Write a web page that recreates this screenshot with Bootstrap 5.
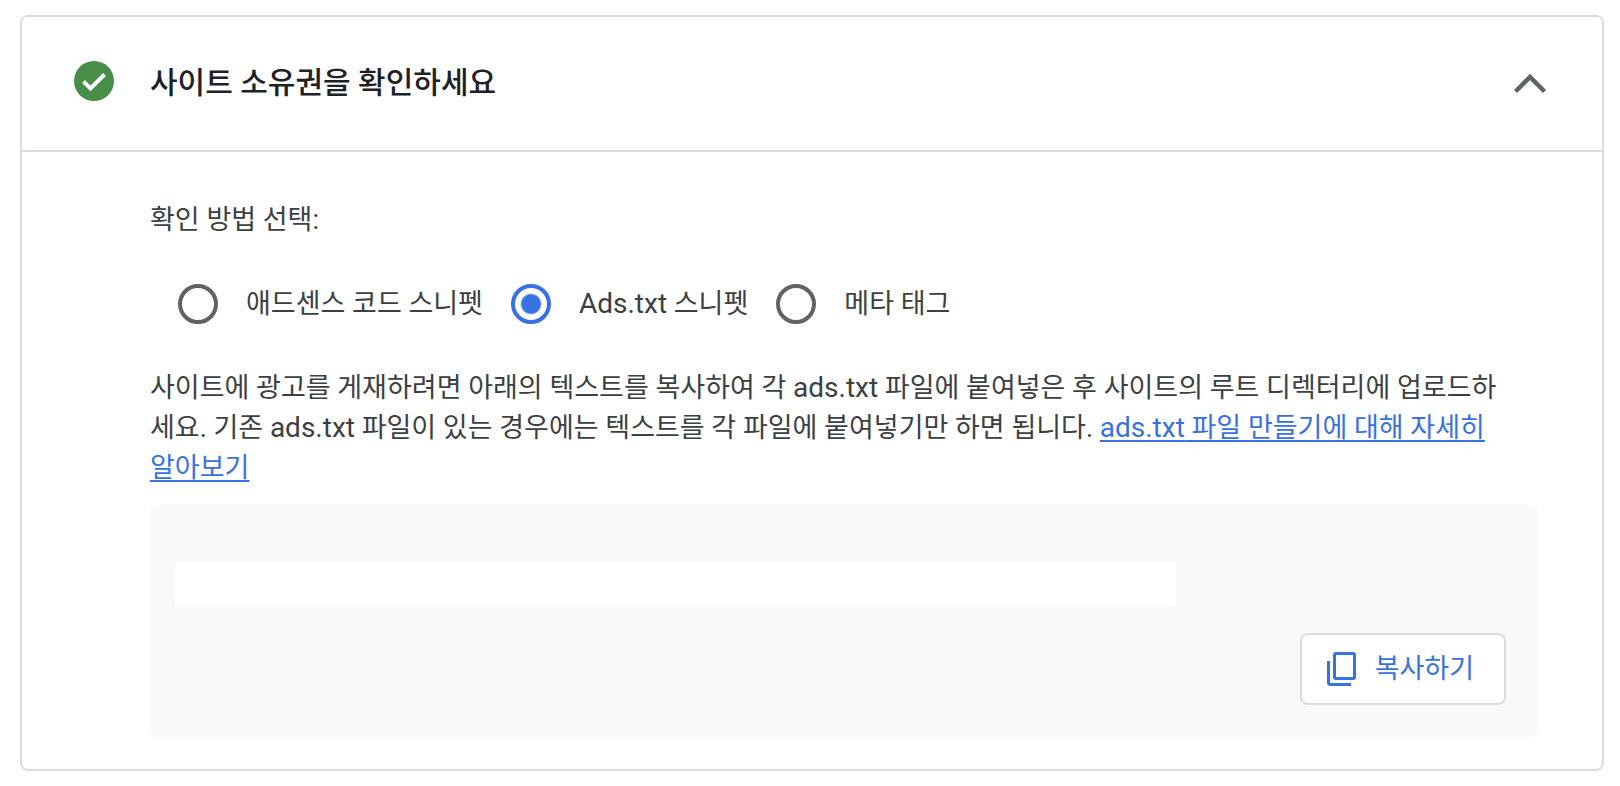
<!DOCTYPE html>
<html lang="ko">
<head>
<meta charset="utf-8">
<meta name="viewport" content="width=device-width, initial-scale=1">
<title>사이트 소유권 확인</title>
<link href="https://cdn.jsdelivr.net/npm/bootstrap@5.3.0/dist/css/bootstrap.min.css" rel="stylesheet">
<style>
  body { font-family: Roboto, "Noto Sans CJK KR", sans-serif; font-size: 27px; line-height: 40px; color: #3c4043; background: #fff; }
  .verify-wrap { padding: 15px 16px 16px 20px; }
  .verify-card { border: 2px solid #dadce0; border-radius: 8px; }
  .verify-head { padding: 44px 52px 45px; border-bottom: 2px solid #dadce0; border-radius: 0; background: #fff; gap: 36px; }
  .verify-title { font-size: 30px; line-height: 44px; font-weight: 500; color: #202124; }
  .toggle-btn { line-height: 0; color: #5f6368; }
  .verify-body { padding: 48px 64px 32px 128px; }
  .methods { padding: 0 28px; margin: 44px 0; gap: 28px; }
  .methods label { gap: 28px; }
  .methods .form-check-input { width: 40px; height: 40px; margin: 0; border: 4px solid #5f6368; background: #fff; box-shadow: none; }
  .methods .form-check-input:checked { border-color: #3871e0; background: radial-gradient(circle, #3871e0 0 9px, #fff 11px); }
  .file-name { font-size: 28px; line-height: 1; }
  .guide { padding-right: 34px; }
  .guide a { color: #3871e0; text-decoration-thickness: 2px; text-underline-offset: 3px; }
  .snippet { margin-top: 17px; padding: 58px 32px 32px 25px; border-radius: 8px; background: #f8f9fb; }
  .snippet-code { width: 100%; max-width: 1001px; height: 43px; }
  .copy-btn { margin-top: 27px; padding: 14px 30px 14px 24px; gap: 18px; border: 2px solid #dadce0; border-radius: 8px; background: #fff; color: #3871e0; font-size: 27px; line-height: 40px; }
</style>
</head>
<body>
<main class="verify-wrap">
  <section class="card verify-card">
    <div class="card-header verify-head d-flex align-items-start">
      <svg width="40" height="40" viewBox="0 0 40 40" aria-hidden="true"><circle cx="20" cy="20" r="20" fill="#478f48"/><path d="M9.5 20.500L16.500 27.500L30.500 13.500" fill="none" stroke="#fff" stroke-width="4"/></svg>
      <h1 class="verify-title flex-grow-1 mb-0">사이트 소유권을 확인하세요</h1>
      <button type="button" class="btn p-0 border-0 toggle-btn" aria-label="접기" aria-expanded="true" data-bs-toggle="collapse" data-bs-target="#verifyBody">
        <svg width="40" height="40" viewBox="0 0 40 40" fill="none" stroke="currentColor" stroke-width="4.500"><path d="M5.500 30.500L20 16L34.500 30.500"/></svg>
      </button>
    </div>
    <div id="verifyBody" class="collapse show">
      <div class="card-body verify-body">
        <p class="mb-0" id="methodLabel">확인 방법 선택:</p>
        <div class="methods d-flex flex-wrap" role="radiogroup" aria-labelledby="methodLabel">
          <label class="d-flex align-items-center" for="m1"><input class="form-check-input" type="radio" name="method" id="m1"><span>애드센스 코드 스니펫</span></label>
          <label class="d-flex align-items-center" for="m2"><input class="form-check-input" type="radio" name="method" id="m2" checked><span><span class="file-name">Ads.txt</span> 스니펫</span></label>
          <label class="d-flex align-items-center" for="m3"><input class="form-check-input" type="radio" name="method" id="m3"><span>메타 태그</span></label>
        </div>
        <p class="guide mb-0">사이트에 광고를 게재하려면 아래의 텍스트를 복사하여 각 <span class="file-name">ads.txt</span> 파일에 붙여넣은 후 사이트의 루트 디렉터리에 업로드하세요. 기존 <span class="file-name">ads.txt</span> 파일이 있는 경우에는 텍스트를 각 파일에 붙여넣기만 하면 됩니다. <a href="#"><span class="file-name">ads.txt</span> 파일 만들기에 대해 자세히 알아보기</a></p>
        <div class="snippet d-flex flex-column">
          <div class="snippet-code bg-white"></div>
          <button type="button" class="btn copy-btn d-flex align-items-center align-self-end">
            <svg width="31" height="36" viewBox="0 0 31 36" fill="none" stroke="currentColor" stroke-width="3" aria-hidden="true"><rect x="8.500" y="2.500" width="20" height="25" rx="1.500"/><path d="M2.500 10V31.500Q2.500 33.500 4.500 33.500H25"/></svg>
            <span>복사하기</span>
          </button>
        </div>
      </div>
    </div>
  </section>
</main>
<script src="https://cdn.jsdelivr.net/npm/bootstrap@5.3.0/dist/js/bootstrap.bundle.min.js"></script>
</body>
</html>
